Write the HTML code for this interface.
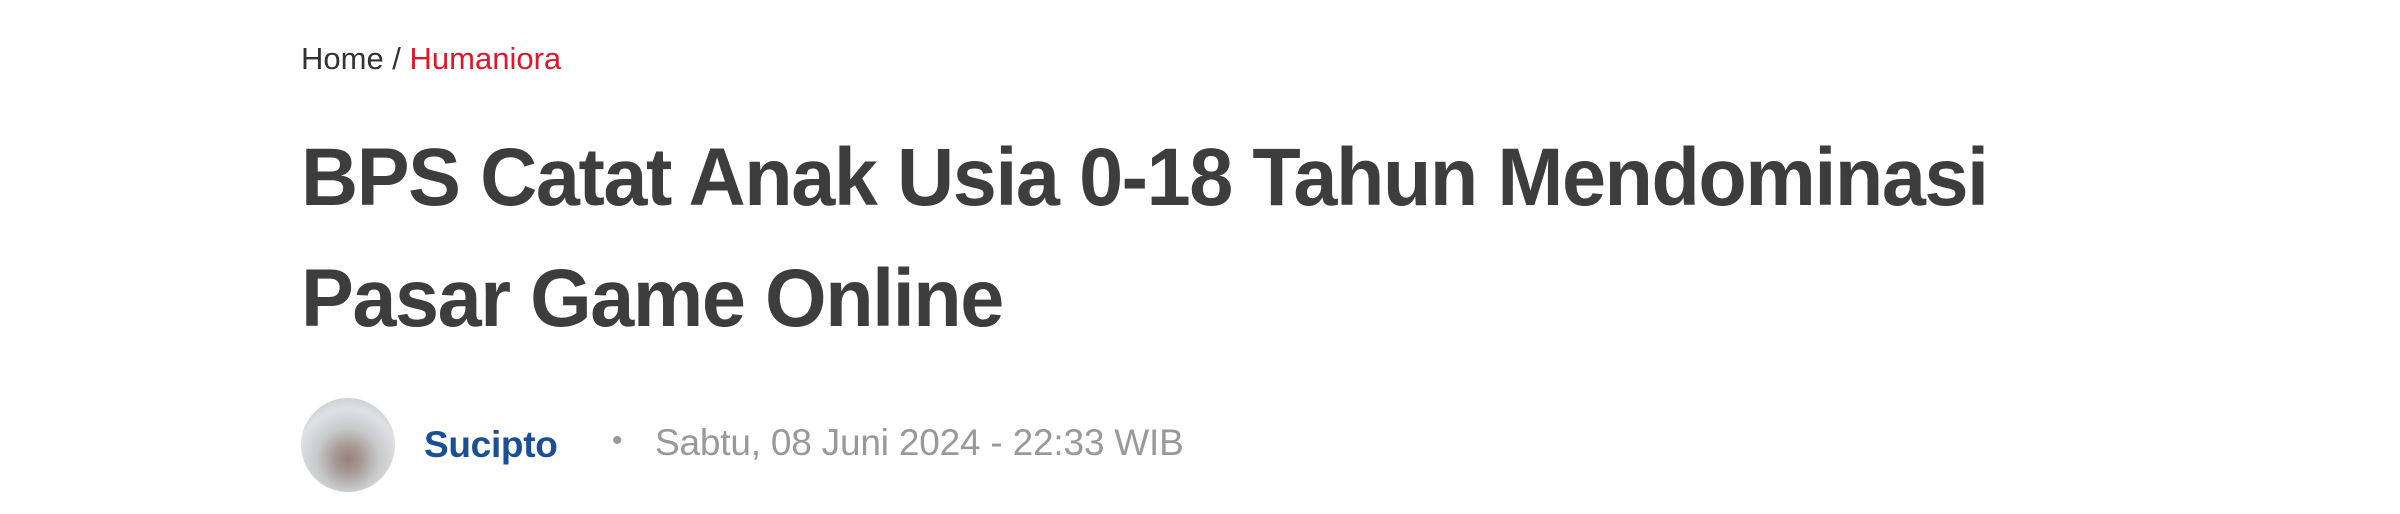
<!DOCTYPE html>
<html><head><meta charset="utf-8"><style>
html,body{margin:0;padding:0;background:#fff;width:2400px;height:514px;overflow:hidden;font-family:"Liberation Sans",Arial,sans-serif}
.bc{position:absolute;left:301px;top:41px;font-size:31px;color:#333;white-space:nowrap;letter-spacing:0px}
.bc span{color:#e0162b}
h1{position:absolute;left:301px;top:117px;margin:0;font-size:82px;line-height:121px;font-weight:bold;color:#3d3d3d;letter-spacing:-1.5px;width:2150px;transform:scaleX(0.966);transform-origin:0 0}
.av{position:absolute;left:301px;top:398px;width:94px;height:94px;border-radius:50%;background:radial-gradient(circle at 50% 65%,#9a7f7c 0,#a89a96 18%,#c7c9cb 40%,#dfe2e5 65%,#b9bcbe 100%)}
.name{position:absolute;left:424px;top:424px;font-size:37px;font-weight:bold;color:#1a4f94;letter-spacing:-0.3px}
.dot{position:absolute;left:612px;top:424px;font-size:30px;color:#999}
.date{position:absolute;left:655px;top:422px;font-size:37px;color:#999;letter-spacing:-0.2px;white-space:nowrap}
</style></head><body>
<div class="bc">Home / <span>Humaniora</span></div>
<h1>BPS Catat Anak Usia 0-18 Tahun Mendominasi<br>Pasar Game Online</h1>
<div class="av"></div>
<div class="name">Sucipto</div>
<div class="dot">•</div>
<div class="date">Sabtu, 08 Juni 2024 - 22:33 WIB</div>
</body></html>
